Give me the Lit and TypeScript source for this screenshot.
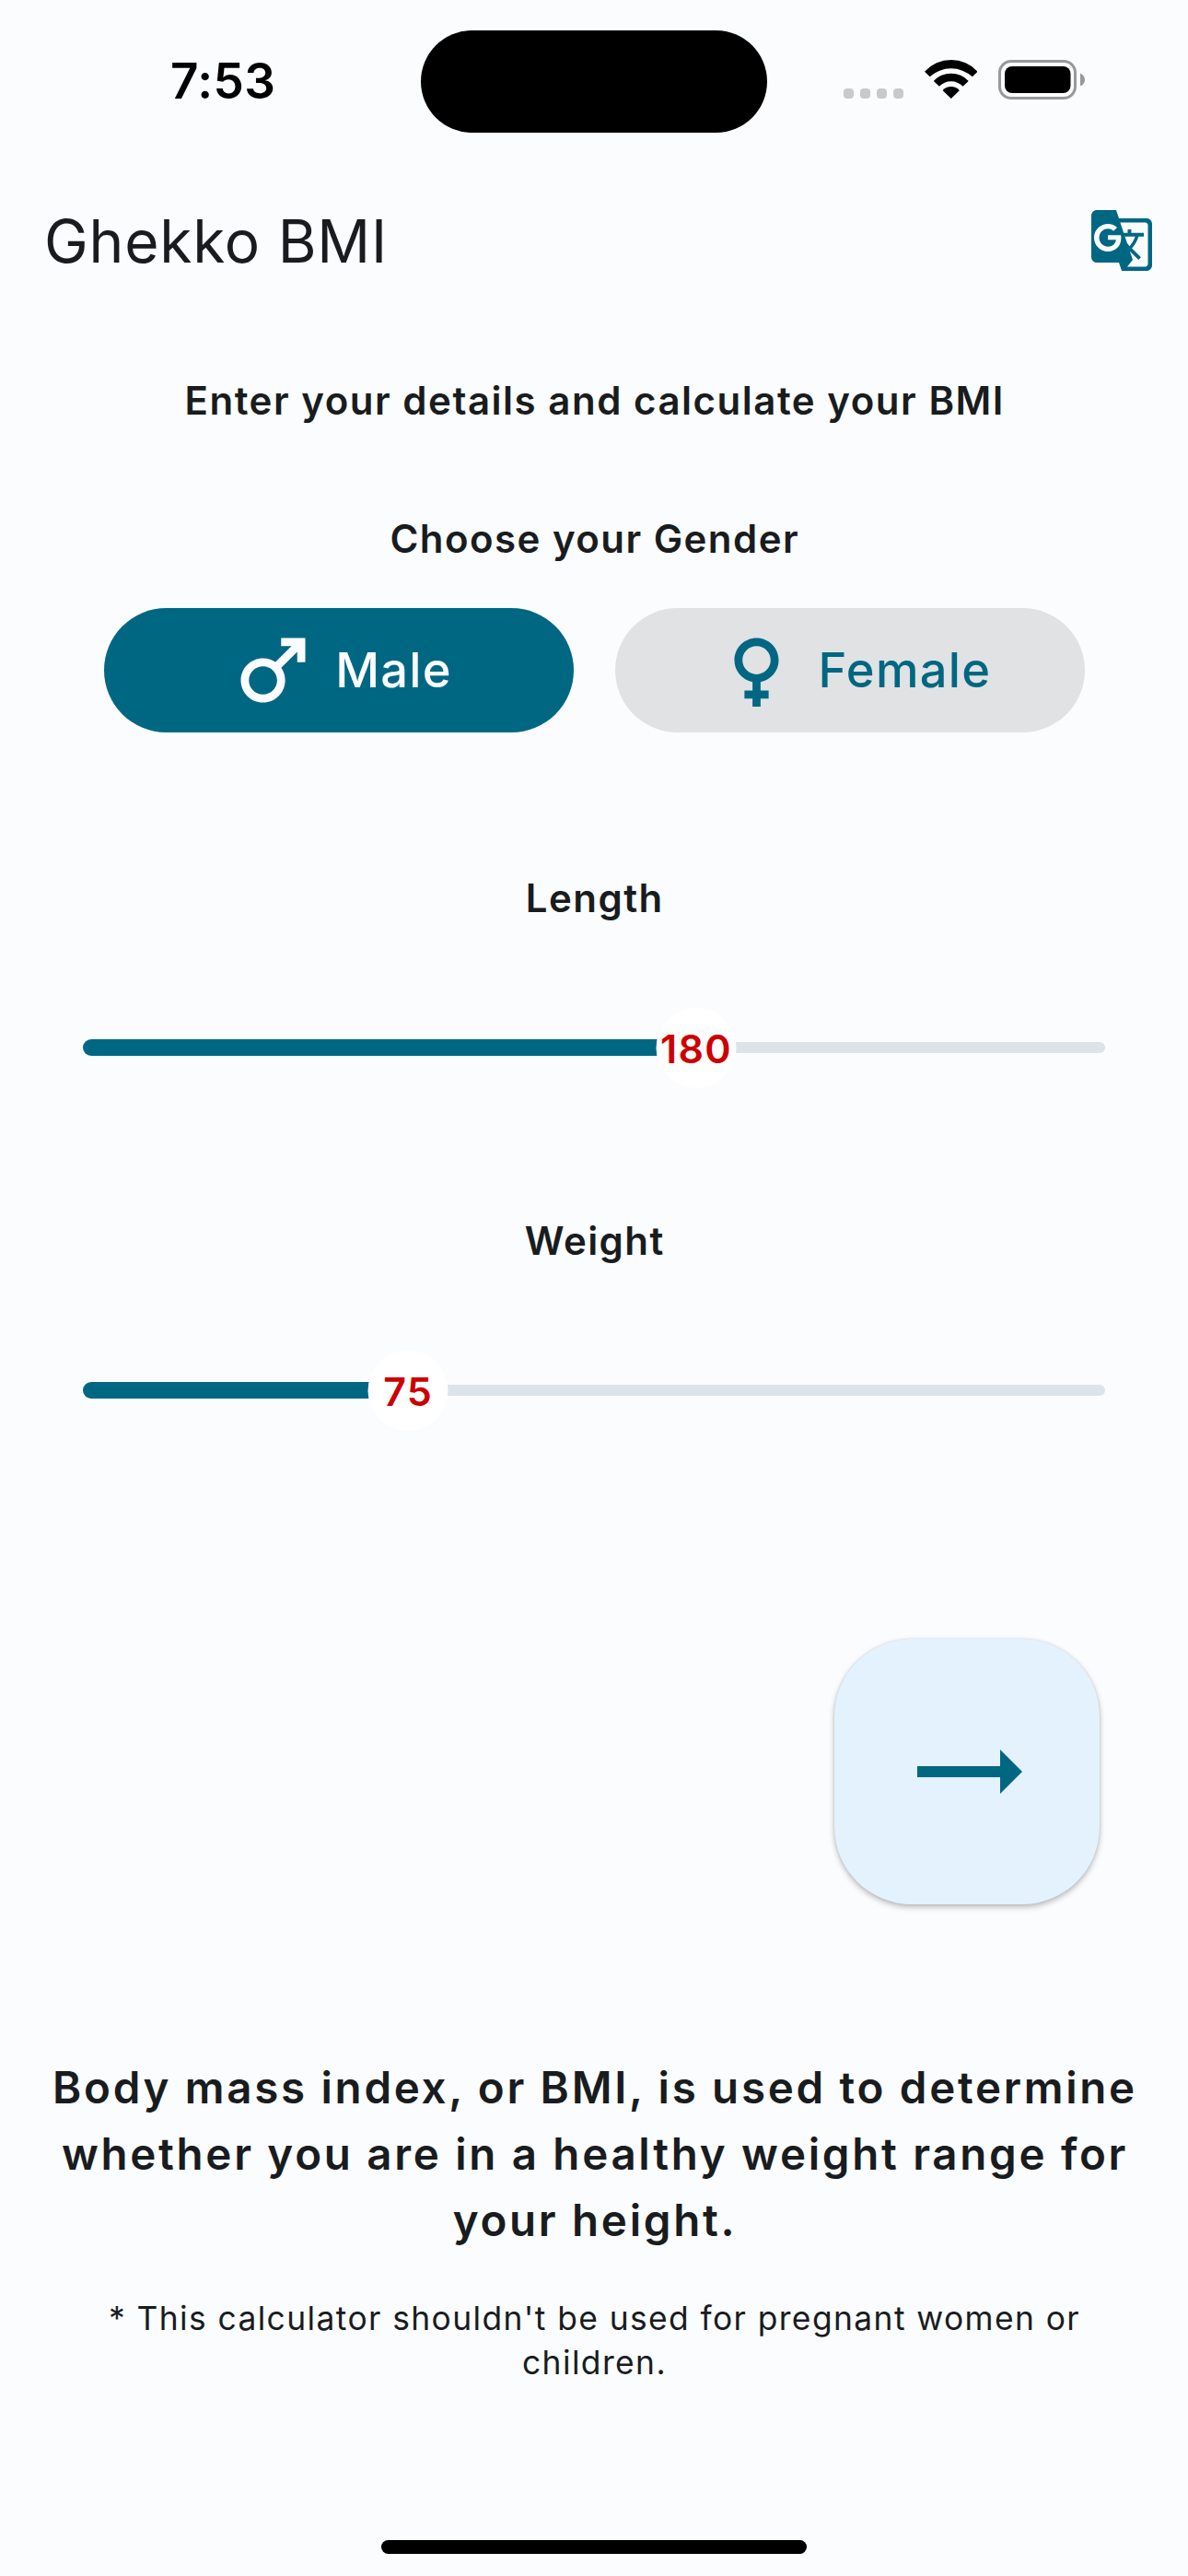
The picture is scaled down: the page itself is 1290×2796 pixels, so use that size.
import { LitElement, html, css, svg } from "lit";
import { customElement, property } from "lit/decorators.js";

const MALE =
  "M9.5 11c1.93 0 3.5 1.57 3.5 3.5S11.43 18 9.5 18 6 16.43 6 14.5 7.57 11 9.5 11zm0-2C6.46 9 4 11.46 4 14.5S6.46 20 9.5 20s5.5-2.46 5.5-5.5c0-1.16-.36-2.23-.97-3.12L18 7.42V10h2V4h-6v2h2.58l-3.97 3.97C11.73 9.36 10.66 9 9.5 9z";
const FEMALE =
  "M17.5 9.5C17.5 6.46 15.04 4 12 4S6.5 6.46 6.5 9.5c0 2.7 1.94 4.93 4.5 5.4V17H9v2h2v2h2v-2h2v-2h-2v-2.1c2.56-.47 4.5-2.7 4.5-5.4zm-9 0C8.5 7.57 10.07 6 12 6s3.5 1.57 3.5 3.5S13.93 13 12 13s-3.5-1.57-3.5-3.5z";
const TRANSLATE =
  "M21 4H11l-1-3H3c-1.1 0-2 .9-2 2v15c0 1.1.9 2 2 2h8l1 3h9c1.1 0 2-.9 2-2V6c0-1.1-.9-2-2-2zM7 16c-2.76 0-5-2.24-5-5s2.24-5 5-5c1.35 0 2.48.5 3.35 1.3L9.03 8.57c-.38-.36-1.04-.78-2.03-.78-1.74 0-3.15 1.44-3.15 3.21S5.26 14.21 7 14.21c2.01 0 2.84-1.44 2.92-2.41v-.01H7v-1.71h4.68c.07.31.12.61.12 1.02C11.8 13.97 9.89 16 7 16zm6.17-5.42h3.7c-.43 1.25-1.11 2.43-2.05 3.47-.31-.35-.6-.72-.86-1.1l-.79-2.37zm8.33 9.92c0 .55-.45 1-1 1H14l2-2.5-1.04-3.1 3.1 3.1.92-.92-3.3-3.25.02-.02c1.13-1.25 1.93-2.69 2.4-4.22H20v-1.3h-4.53V8h-1.29v1.29h-1.44L11.46 5.5h9.04c.55 0 1 .45 1 1v14z";
const ARROW = "M22 12l-4-4v3H3v2h15v3z";

const icon = (d: string, size: number) => html`
  <svg width=${size} height=${size} viewBox="0 0 24 24" fill="currentColor" aria-hidden="true">
    ${svg`<path d=${d} />`}
  </svg>
`;

@customElement("status-bar")
class StatusBar extends LitElement {
  static styles = css`
    :host {
      display: grid;
      grid-template-columns: 457px 376px 1fr;
      align-items: center;
      height: 111px;
      padding: 33px 0;
      color: #000;
    }
    .time {
      padding-left: 185px;
      padding-bottom: 2px;
      font-size: 53px;
      font-weight: 600;
      line-height: 60px;
      letter-spacing: 0.4px;
    }
    .island {
      height: 111px;
      border-radius: 56px;
      background: #000;
    }
    .indicators {
      display: flex;
      align-items: center;
      padding-left: 83px;
      height: 43px;
      margin-top: -5px;
    }
    .dots {
      display: flex;
      gap: 7px;
      align-self: flex-end;
      margin-bottom: 1px;
    }
    .dot {
      width: 11px;
      height: 11px;
      border-radius: 4px;
      background: #c8c9cb;
    }
    .wifi {
      margin-left: 22.5px;
      margin-top: -1px;
    }
    .battery {
      margin-left: 23px;
    }
    svg {
      display: block;
    }
  `;

  render() {
    return html`
      <div class="time">7:53</div>
      <div class="island"></div>
      <div class="indicators">
        <div class="dots">${[0, 1, 2, 3].map(() => html`<div class="dot"></div>`)}</div>
        <svg class="wifi" width="57.5" height="42" viewBox="0 0 57.5 42">
          <path d="M0 12.7A38.9 38.9 0 0 1 57.5 12.7L51.8 18.3A34 34 0 0 0 5.7 18.3Z" />
          <path d="M9.8 23A25.7 25.7 0 0 1 47.7 23L41.6 28.7A17.9 17.9 0 0 0 15.9 28.7Z" />
          <path d="M19.7 33.3A11.6 11.6 0 0 1 37.8 33.3L28.75 42Z" />
        </svg>
        <svg class="battery" width="95" height="43" viewBox="0 0 95 43">
          <rect x="1.5" y="1.5" width="82" height="40" rx="12.5" fill="none" stroke="#98999a" stroke-width="3" />
          <rect x="7" y="7" width="71.5" height="29" rx="8" />
          <path d="M89 14.5Q94 17 94 21.5T89 28.5Z" fill="#98999a" />
        </svg>
      </div>
    `;
  }
}

@customElement("gender-button")
class GenderButton extends LitElement {
  @property() label = "";
  @property() glyph = "";
  @property({ type: Boolean, reflect: true }) selected = false;

  static styles = css`
    :host {
      display: flex;
      align-items: center;
      justify-content: center;
      gap: 15px;
      height: 135px;
      border-radius: 68px;
      background: #e1e2e3;
      color: #006783;
    }
    :host([selected]) {
      background: #006783;
      color: #fbfcfe;
    }
    .label {
      padding-bottom: 2px;
      font-size: 52.4px;
      line-height: 72px;
      font-weight: 450;
      letter-spacing: 1.3px;
    }
    svg {
      display: block;
    }
  `;

  render() {
    return html`${icon(this.glyph, 105)}<span class="label">${this.label}</span>`;
  }
}

@customElement("value-slider")
class ValueSlider extends LitElement {
  @property({ type: Number }) value = 0;
  @property({ type: Number }) min = 0;
  @property({ type: Number }) max = 100;

  static styles = css`
    :host {
      display: flex;
      align-items: center;
      position: relative;
      height: 88px;
      margin: 0 90px;
    }
    .active {
      height: 18px;
      border-radius: 9px 0 0 9px;
      background: #006783;
    }
    .rest {
      flex: 1;
      height: 12px;
      border-radius: 0 6px 6px 0;
      background: #dce4e9;
    }
    .thumb {
      position: absolute;
      top: 0.5px;
      width: 87px;
      height: 87px;
      box-sizing: border-box;
      padding-top: 2px;
      border-radius: 50%;
      transform: translateX(-50%);
      display: flex;
      align-items: center;
      justify-content: center;
      background: #fff;
      color: #cc0000;
      font-size: 43px;
      line-height: 50px;
      font-weight: 560;
      letter-spacing: 1.3px;
    }
  `;

  render() {
    const share = ((this.value - this.min) / (this.max - this.min)) * 100;
    return html`
      <div class="active" style="width:${share}%"></div>
      <div class="rest"></div>
      <div class="thumb" style="left:${share}%">${this.value}</div>
    `;
  }
}

@customElement("app-root")
class AppRoot extends LitElement {
  static styles = css`
    :host {
      display: flex;
      flex-direction: column;
      box-sizing: border-box;
      width: 1290px;
      height: 2796px;
      overflow: hidden;
      padding-bottom: 24px;
      background: #fbfcfe;
      color: #191c1e;
      font-family: Inter, "Liberation Sans", sans-serif;
    }
    .appbar {
      display: flex;
      align-items: center;
      justify-content: space-between;
      height: 170px;
      padding: 0 36px 0 48px;
    }
    .title {
      font-size: 64px;
      line-height: 80px;
      font-weight: 400;
      letter-spacing: 0.8px;
    }
    .translate {
      color: #006783;
      margin-top: -2px;
    }
    svg {
      display: block;
    }
    .heading {
      text-align: center;
      text-indent: 1.5px;
      font-size: 42px;
      line-height: 60px;
      font-weight: 620;
      letter-spacing: 1.45px;
    }
    .intro {
      margin-top: 58px;
      letter-spacing: 1.52px;
    }
    .choose {
      margin-top: 90px;
    }
    .genders {
      display: grid;
      grid-template-columns: 1fr 1fr;
      gap: 45px;
      margin: 45px 112.5px 0;
    }
    .length {
      margin: 150px 0 88px;
    }
    .weight {
      margin: 136px 0 88px;
    }
    .next {
      display: flex;
      align-items: center;
      justify-content: center;
      align-self: flex-end;
      width: 288px;
      height: 288px;
      margin: 226px 96px 0 0;
      border-radius: 84px;
      background: #e3f2fd;
      color: #006783;
      box-shadow: 0 3px 6px rgba(0, 0, 0, 0.26), 0 0 3px rgba(0, 0, 0, 0.1);
    }
    .about {
      margin: 163px 48px 0;
      text-align: center;
      text-indent: 2px;
      font-size: 47.5px;
      line-height: 72px;
      font-weight: 620;
      letter-spacing: 2.7px;
    }
    .note {
      margin: 47px 96px 0;
      text-align: center;
      text-indent: 1px;
      font-size: 35.4px;
      line-height: 48px;
      letter-spacing: 1.4px;
    }
    .home {
      align-self: center;
      width: 462px;
      height: 15px;
      margin-top: auto;
      border-radius: 8px;
      background: #000;
    }
    .line {
      display: block;
      white-space: nowrap;
    }
  `;

  render() {
    return html`
      <status-bar></status-bar>
      <header class="appbar">
        <span class="title">Ghekko BMI</span>
        <span class="translate">${icon(TRANSLATE, 72)}</span>
      </header>
      <div class="heading intro">Enter your details and calculate your BMI</div>
      <div class="heading choose">Choose your Gender</div>
      <div class="genders">
        <gender-button label="Male" .glyph=${MALE} selected></gender-button>
        <gender-button label="Female" .glyph=${FEMALE}></gender-button>
      </div>
      <div class="heading length">Length</div>
      <value-slider .value=${180} .min=${120} .max=${220}></value-slider>
      <div class="heading weight">Weight</div>
      <value-slider .value=${75} .min=${40} .max=${150}></value-slider>
      <div class="next">${icon(ARROW, 144)}</div>
      <div class="about">
        <span class="line">Body mass index, or BMI, is used to determine</span>
        <span class="line">whether you are in a healthy weight range for</span>
        <span class="line">your height.</span>
      </div>
      <div class="note">
        <span class="line">* This calculator shouldn't be used for pregnant women or</span>
        <span class="line">children.</span>
      </div>
      <div class="home"></div>
    `;
  }
}
